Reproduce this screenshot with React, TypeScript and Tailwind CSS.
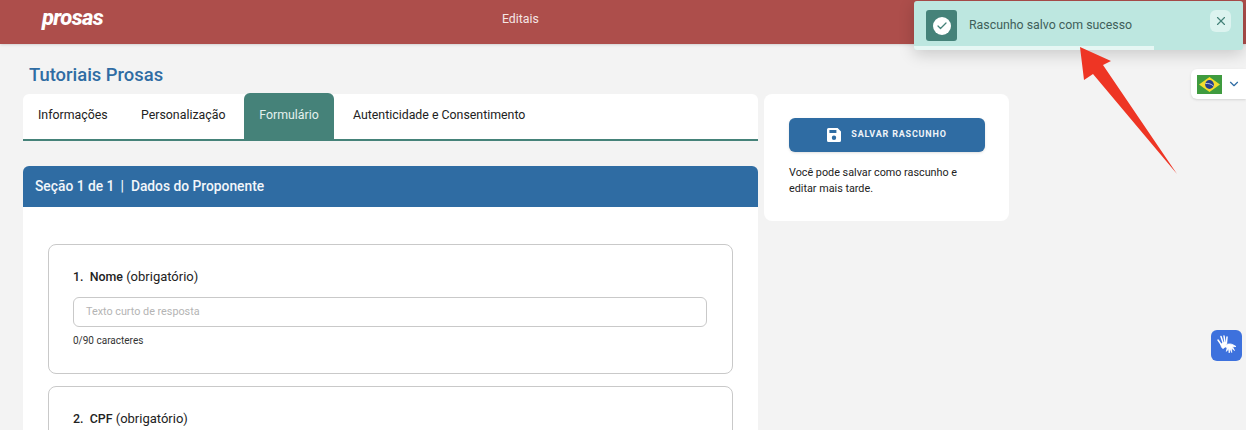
import { Check, ChevronDown, X } from 'lucide-react'

const font = { fontFamily: 'Roboto, sans-serif' }

const BrazilFlag = () => (
  <svg width="25" height="19" viewBox="0 0 25 19">
    <rect width="25" height="19" fill="#3f9b3f" />
    <polygon points="12.5,2 23,9.5 12.5,17 2,9.5" fill="#f2dc2e" />
    <circle cx="12.5" cy="9.5" r="4.4" fill="#27408f" />
    <path d="M8.4 8.6c3-.5 6 .4 8 2.4" fill="none" stroke="#fff" strokeWidth="0.7" />
  </svg>
)

const SaveIcon = () => (
  <svg width="14" height="14" viewBox="0 0 14 14" fill="#fff">
    <path d="M1.5 0H10.6L14 3.4V12.5A1.5 1.5 0 0 1 12.5 14H1.5A1.5 1.5 0 0 1 0 12.5V1.5A1.5 1.5 0 0 1 1.5 0ZM2.4 1.9V4.9H9.4V1.9ZM7 7.6A2.2 2.2 0 1 0 7 12A2.2 2.2 0 1 0 7 7.6Z" fillRule="evenodd" />
  </svg>
)

const SignLanguageIcon = () => (
  <svg width="24" height="24" viewBox="0 0 24 24" fill="none" stroke="#fff" strokeLinecap="round">
    <path d="M6 2.500l2 6M9 2l1 6.500M12 3l-.5 5.500M3 6l3.500 5" strokeWidth="1.500" />
    <path d="M6 10.500c1-2 4-2.500 6-1.500l-1.500 2.500-1.500 2.500c-1.500 1-3-.5-3-3.500Z" fill="#fff" strokeWidth="1" />
    <path d="M10 12c2-2.500 5.500-2.500 8-1.200l3 1.700-3.500.2 2 3.800-3-2.500.2 4.500-1.500-3.900-1 4.300-.6-4.500-2.200 3 .8-4c-1.500 0-2.500-.5-2.200-1.500Z" fill="#fff" strokeWidth="0.8" />
  </svg>
)

const Question = ({ number, name, children }: { number: number; name: string; children?: React.ReactNode }) => (
  <div className="h-[130px] rounded-lg border border-[#c9c9c9] px-6 pt-[23px]">
    <p className="text-[13px] leading-[18px] text-[#222]">
      <span className="text-[12.4px] font-medium">{number}.&nbsp; {name}</span> (obrigatório)
    </p>
    {children}
  </div>
)

export default function App() {
  return (
    <div className="relative h-[430px] w-[1246px] overflow-hidden bg-[#f3f3f3]" style={font}>
      <header className="relative flex h-[44px] items-center bg-[#ad4e4b] shadow-sm">
        <span className="mb-[8px] ml-[42px] w-[460px] text-[22px] font-extrabold italic leading-none tracking-[-0.65px] text-white">prosas</span>
        <span className="mb-[6px] text-[12.3px] text-[#f5e6e5]">Editais</span>
      </header>

      <h1 className="ml-[29px] mt-[20px] text-[18.4px] font-medium leading-[22px] text-[#2f6ca3]">Tutoriais Prosas</h1>

      <main className="ml-[23px] mt-[8px] flex items-start gap-[6px]">
        <div className="w-[735px]">
          <nav className="flex h-[47px] rounded-t-md border-b-2 border-[#458279] bg-white text-[12.35px] text-[#222]">
            <span className="flex w-[118px] items-center pb-[2px] pl-[15px]">Informações</span>
            <span className="flex w-[103px] items-center pb-[2px]">Personalização</span>
            <span className="-mt-px flex w-[90px] items-center justify-center rounded-t-md bg-[#458279] pb-px text-[#e4f1ee]">Formulário</span>
            <span className="flex items-center pb-[2px] pl-[19px]">Autenticidade e Consentimento</span>
          </nav>
          <div className="mt-[25px] flex h-[41px] items-center rounded-t-md bg-[#2f6ca3] px-3 text-[13.8px] font-medium text-[#f2f6fa]">
            Seção 1 de 1&nbsp;&thinsp;|&nbsp; Dados do Proponente
          </div>
          <div className="flex flex-col gap-3 bg-white px-[25px] pt-[37px] pb-6">
            <Question number={1} name="Nome">
              <div className="mt-[11px] flex h-[30px] w-[634px] items-center rounded-md border border-[#c9c9c9] px-3 pt-px text-[10.8px] text-[#b4b4b4]">
                Texto curto de resposta
              </div>
              <p className="mt-[7px] text-[10px] leading-[14px] text-[#333]">0/90 caracteres</p>
            </Question>
            <Question number={2} name="CPF" />
          </div>
        </div>

        <aside className="h-[127px] w-[245px] rounded-lg bg-white pl-[25px] pr-[24px] pt-[24px]">
          <button className="flex h-[34px] w-full items-center justify-center gap-[10px] rounded-md bg-[#2f6ca3] text-[9px] font-bold tracking-[0.8px] text-[#eef3f8] shadow-sm">
            <SaveIcon />
            SALVAR RASCUNHO
          </button>
          <p className="mt-[13px] text-[10.8px] leading-[16px] text-[#222]">
            Você pode salvar como rascunho e editar mais tarde.
          </p>
        </aside>
      </main>

      {/* toast */}
      <div className="absolute left-[914px] top-px h-[49px] w-[329px] overflow-hidden rounded-[3px] bg-[#bde7e0] shadow-[0_4px_16px_rgba(0,0,0,0.18)]">
        <div className="flex items-start pl-[12px] pt-[9px]">
          <div className="flex h-[31px] w-[31px] items-center justify-center rounded-[3px] bg-[#458279]">
            <div className="flex h-[18px] w-[18px] items-center justify-center rounded-full bg-white">
              <Check size={12} strokeWidth={2.5} color="#458279" />
            </div>
          </div>
          <span className="ml-[12px] mt-[7px] w-[241px] text-[12.35px] leading-[16px] text-[#3f5f5a]">Rascunho salvo com sucesso</span>
          <div className="flex h-[22px] w-[21px] items-center justify-center rounded-md bg-[#dcf3ef]">
            <X size={14} color="#458279" />
          </div>
        </div>
        <div className="absolute bottom-0 left-0 h-1 w-[240px] bg-[#e6f7f4]" />
      </div>

      {/* language picker */}
      <div className="absolute left-[1191px] top-[69px] flex h-[30px] w-[55px] items-center gap-[5px] rounded-l-md bg-white pl-[6px] shadow-sm">
        <BrazilFlag />
        <ChevronDown size={14} color="#2f6ca3" />
      </div>

      {/* vlibras */}
      <div className="absolute left-[1211px] top-[330px] flex h-[31px] w-[31px] items-center justify-center rounded-md bg-[#3d71dd]">
        <SignLanguageIcon />
      </div>

      {/* annotation arrow */}
      <svg className="absolute left-0 top-0" width="1246" height="430">
        <polygon points="1080,47 1111,61 1103,65 1177,174 1093,74 1084,80" fill="#ee3524" />
      </svg>
    </div>
  )
}
